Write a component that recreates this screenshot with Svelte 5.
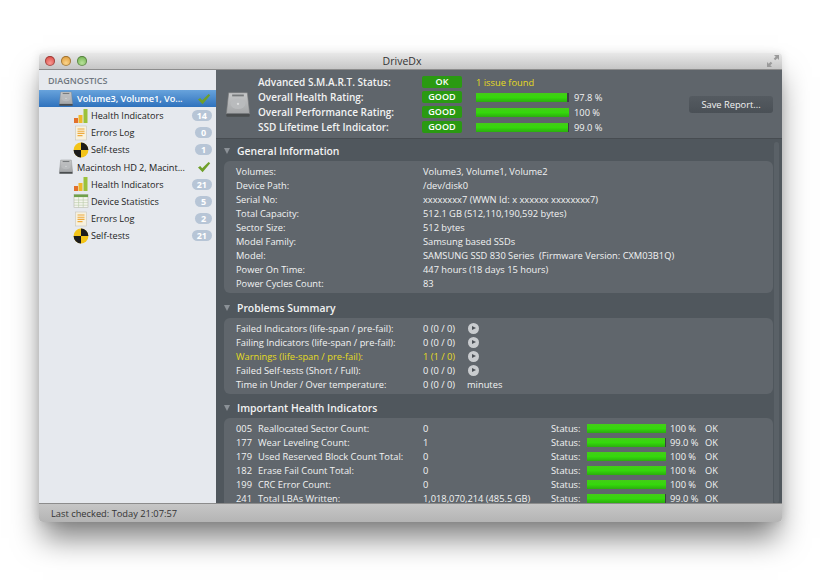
<script>
	const tree = [
		{
			name: 'Volume3, Volume1, Vo...',
			selected: true,
			items: [
				{ icon: 'bars', label: 'Health Indicators', count: 14 },
				{ icon: 'log', label: 'Errors Log', count: 0 },
				{ icon: 'test', label: 'Self-tests', count: 1 }
			]
		},
		{
			name: 'Macintosh HD 2, Macint...',
			items: [
				{ icon: 'bars', label: 'Health Indicators', count: 21 },
				{ icon: 'table', label: 'Device Statistics', count: 5 },
				{ icon: 'log', label: 'Errors Log', count: 2 },
				{ icon: 'test', label: 'Self-tests', count: 21 }
			]
		}
	];

	const ratings = [
		{ label: 'Overall Health Rating:', pct: 97.8, text: '97.8 %' },
		{ label: 'Overall Performance Rating:', pct: 100, text: '100 %' },
		{ label: 'SSD Lifetime Left Indicator:', pct: 99, text: '99.0 %' }
	];

	const general = [
		['Volumes:', 'Volume3, Volume1, Volume2'],
		['Device Path:', '/dev/disk0'],
		['Serial No:', 'xxxxxxxx7 (WWN Id: x xxxxxx xxxxxxxx7)'],
		['Total Capacity:', '512.1 GB (512,110,190,592 bytes)'],
		['Sector Size:', '512 bytes'],
		['Model Family:', 'Samsung based SSDs'],
		['Model:', 'SAMSUNG SSD 830 Series  (Firmware Version: CXM03B1Q)'],
		['Power On Time:', '447 hours (18 days 15 hours)'],
		['Power Cycles Count:', '83']
	];

	const problems = [
		{ label: 'Failed Indicators (life-span / pre-fail):', value: '0 (0 / 0)', go: true },
		{ label: 'Failing Indicators (life-span / pre-fail):', value: '0 (0 / 0)', go: true },
		{ label: 'Warnings (life-span / pre-fail):', value: '1 (1 / 0)', go: true, warn: true },
		{ label: 'Failed Self-tests (Short / Full):', value: '0 (0 / 0)', go: true },
		{ label: 'Time in Under / Over temperature:', value: '0 (0 / 0)', unit: 'minutes' }
	];

	const health = [
		['005', 'Reallocated Sector Count:', '0', 100, '100 %'],
		['177', 'Wear Leveling Count:', '1', 99, '99.0 %'],
		['179', 'Used Reserved Block Count Total:', '0', 100, '100 %'],
		['182', 'Erase Fail Count Total:', '0', 100, '100 %'],
		['199', 'CRC Error Count:', '0', 100, '100 %'],
		['241', 'Total LBAs Written:', '1,018,070,214 (485.5 GB)', 99, '99.0 %']
	];
</script>

{#snippet disk(size)}
	<svg class="disk" width={size} height={size} viewBox="0 0 24 24">
		<defs>
			<linearGradient id="metal" x1="0" y1="0" x2="0" y2="1">
				<stop offset="0" stop-color="#c6c7c8" />
				<stop offset="1" stop-color="#a4a6a8" />
			</linearGradient>
		</defs>
		<path d="M4 1.5h16l2 18H2z" fill="url(#metal)" stroke="#77797b" stroke-width=".5" />
		<rect x="7" y="3" width="10" height="1.6" fill="#777a7c" />
		<rect x="2" y="19.5" width="20" height="2.6" rx=".8" fill="#4a4d4f" />
		<ellipse cx="12" cy="11" rx="6.4" ry="4.4" fill="#b9bbbd" />
		<circle cx="12" cy="11" r="1" fill="#dcddde" />
	</svg>
{/snippet}

{#snippet check()}
	<svg class="check" width="14" height="12" viewBox="0 0 14 12">
		<path d="M1 6.5l2.2-1.6 2 2.4L11.6 1l1.6 1.2-7.6 9z" fill="#6f9f2a" />
	</svg>
{/snippet}

{#snippet navIcon(kind)}
	<svg class="nav-icon" width="16" height="16" viewBox="0 0 16 16">
		{#if kind === 'bars'}
			<rect x="1" y="10" width="4" height="5" fill="#e2702a" />
			<rect x="5.5" y="7" width="4" height="8" fill="#f0b82a" />
			<rect x="10.5" y="1" width="4" height="14" fill="#9cc23a" />
		{:else if kind === 'log'}
			<rect x="2.5" y="1" width="11" height="14" fill="#f7f1de" stroke="#c9c6bb" stroke-width=".6" />
			<path d="M4.5 4h7M4.5 6.2h7M4.5 8.4h7M4.5 10.6h5" stroke="#eeaa3c" stroke-width="1.1" />
		{:else if kind === 'table'}
			<rect x="1" y="1.5" width="14" height="13" fill="#f4f5ee" stroke="#b8bab0" stroke-width=".6" />
			<rect x="1" y="1.5" width="14" height="2.6" fill="#6fa04a" />
			<path d="M1 7h14M1 9.6h14M1 12.2h14M5.6 4v10.5M10.2 4v10.5" stroke="#b9cba8" stroke-width=".6" />
		{:else}
			<circle cx="8" cy="8" r="7.4" fill="#f3c418" />
			<path d="M8 8V.6A7.4 7.4 0 0 1 15.4 8zM8 8v7.4A7.4 7.4 0 0 1 .6 8z" fill="#1c1c1c" />
		{/if}
	</svg>
{/snippet}

{#snippet bar(pct)}
	<div class="bar"><div class="fill" style="width: {pct}%"></div></div>
{/snippet}

<div class="page">
	<div class="window">
		<header class="titlebar">
			<div class="lights">
				<span class="light red"></span>
				<span class="light amber"></span>
				<span class="light green"></span>
			</div>
			<div class="title">DriveDx</div>
			<svg class="expand" width="12" height="12" viewBox="0 0 12 12">
				<path d="M7 0h5v5l-1.7-1.7-2 2-1.6-1.6 2-2zM5 12H0V7l1.7 1.7 2-2 1.6 1.6-2 2z" fill="#9a9a9a" />
			</svg>
		</header>

		<div class="body">
			<aside class="sidebar">
				<div class="diag">DIAGNOSTICS</div>
				{#each tree as vol}
					<div class="volume" class:selected={vol.selected}>
						{@render disk(16)}
						<span class="vol-name">{vol.name}</span>
						{@render check()}
					</div>
					{#each vol.items as item}
						<div class="item">
							{@render navIcon(item.icon)}
							<span class="item-label">{item.label}</span>
							<span class="count">{item.count}</span>
						</div>
					{/each}
				{/each}
			</aside>

			<main class="main">
				<section class="summary">
					<div class="big-disk">{@render disk(28)}</div>
					<div class="summary-rows">
						<div class="sum-row">
							<span class="sum-label">Advanced S.M.A.R.T. Status:</span>
							<span class="pill">OK</span>
							<span class="issue">1 issue found</span>
						</div>
						{#each ratings as r}
							<div class="sum-row">
								<span class="sum-label">{r.label}</span>
								<span class="pill">GOOD</span>
								<div class="sum-bar">{@render bar(r.pct)}</div>
								<span class="sum-pct">{r.text}</span>
							</div>
						{/each}
					</div>
					<button class="save">Save Report...</button>
				</section>

				<div class="scroll">
					<div class="track"></div>

					<h2 class="heading first"><span class="tri"></span>General Information</h2>
					<div class="panel general">
						{#each general as [k, v]}
							<div class="row">
								<span class="key">{k}</span>
								<span class="val">{v}</span>
							</div>
						{/each}
					</div>

					<h2 class="heading"><span class="tri"></span>Problems Summary</h2>
					<div class="panel">
						{#each problems as p}
							<div class="row" class:warn={p.warn}>
								<span class="key">{p.label}</span>
								<span class="val short">{p.value}</span>
								{#if p.go}
									<span class="go"></span>
								{/if}
								{#if p.unit}
									<span class="unit">{p.unit}</span>
								{/if}
							</div>
						{/each}
					</div>

					<h2 class="heading"><span class="tri"></span>Important Health Indicators</h2>
					<div class="panel tail">
						{#each health as [id, name, raw, pct, text]}
							<div class="row">
								<span class="id">{id}</span>
								<span class="name">{name}</span>
								<span class="raw">{raw}</span>
								<span class="status">Status:</span>
								<div class="health-bar">{@render bar(pct)}</div>
								<span class="pct">{text}</span>
								<span class="ok">OK</span>
							</div>
						{/each}
					</div>
				</div>
			</main>
		</div>

		<footer class="statusbar">Last checked: Today 21:07:57</footer>
	</div>
</div>

<style>
	:global(body) {
		margin: 0;
		background: #fff;
	}

	.page {
		width: 820px;
		height: 582px;
		box-sizing: border-box;
		padding: 53px 38px 60px 39px;
		font-family: 'Open Sans', sans-serif;
		font-size: 9.3px;
		overflow: hidden;
	}

	.window {
		height: 469px;
		display: flex;
		flex-direction: column;
		border-radius: 4px;
		overflow: hidden;
		box-shadow: 0 20px 28px -4px rgba(0, 0, 0, 0.5), 0 0 10px rgba(0, 0, 0, 0.1);
	}

	.titlebar {
		height: 16px;
		flex: none;
		display: flex;
		align-items: center;
		position: relative;
		background: linear-gradient(#e8e8e8, #c6c6c6);
		border-bottom: 1px solid #8c8c8c;
	}

	.lights {
		display: flex;
		gap: 6px;
		padding-left: 6px;
	}

	.light {
		width: 10px;
		height: 10px;
		border-radius: 50%;
		box-shadow: inset 0 0 0 1px rgba(0, 0, 0, 0.3);
	}

	.red { background: radial-gradient(circle at 50% 70%, #f79a94, #d5362f); }
	.amber { background: radial-gradient(circle at 50% 70%, #fbd58c, #d98d24); }
	.green { background: radial-gradient(circle at 50% 70%, #b8e29a, #62a83f); }

	.title {
		flex: 1;
		text-align: center;
		font-size: 10.5px;
		color: #333;
		margin-right: 50px;
	}

	.expand {
		margin-right: 3px;
	}

	.body {
		flex: 1;
		display: flex;
		min-height: 0;
	}

	.sidebar {
		width: 177px;
		flex: none;
		background: #e6e9ee;
		box-sizing: border-box;
		padding-top: 5px;
	}

	.diag {
		font-size: 9px;
		font-weight: 600;
		color: #6f7780;
		padding-left: 9px;
		height: 15px;
		line-height: 11px;
	}

	.volume {
		height: 17px;
		display: flex;
		align-items: center;
		padding-left: 19px;
		color: #222;
	}

	.volume.selected {
		background: linear-gradient(#68a3dc, #2f72bd);
		color: #fff;
		font-weight: 600;
	}

	.vol-name {
		margin-left: 3px;
		flex: 1;
		white-space: nowrap;
		font-size: 9.2px;
		letter-spacing: -0.05px;
	}

	.check {
		margin-right: 5px;
	}

	.item {
		height: 17.2px;
		display: flex;
		align-items: center;
		padding-left: 34px;
		color: #222;
	}

	.item-label {
		margin-left: 2px;
		flex: 1;
		font-size: 9.1px;
	}

	.count {
		min-width: 7px;
		padding: 0 5px;
		height: 11px;
		line-height: 11px;
		border-radius: 6px;
		background: #b7c5d6;
		color: #fff;
		font-weight: 700;
		font-size: 9px;
		text-align: center;
		margin-right: 4px;
	}

	.main {
		flex: 1;
		min-width: 0;
		display: flex;
		flex-direction: column;
		background: #50575d;
		color: #f2f3f3;
	}

	.summary {
		height: 69px;
		flex: none;
		box-sizing: border-box;
		display: flex;
		align-items: center;
		background: #5f656b;
		border-bottom: 1px solid #474c51;
		padding: 1px 0 0 8px;
	}

	.big-disk {
		width: 34px;
		flex: none;
		display: flex;
	}

	.summary-rows {
		flex: 1;
	}

	.sum-row {
		height: 15px;
		display: flex;
		align-items: center;
	}

	.sum-label {
		width: 164px;
		flex: none;
		font-weight: 600;
		font-size: 10px;
		white-space: nowrap;
	}

	.pill {
		width: 40px;
		height: 12px;
		line-height: 12px;
		flex: none;
		text-align: center;
		border-radius: 2px;
		background: #2a9a12;
		color: #fff;
		font-size: 9px;
		font-weight: 600;
	}

	.issue {
		margin-left: 14px;
		color: #e6dc22;
	}

	.sum-bar {
		width: 93px;
		margin-left: 14px;
		flex: none;
	}

	.sum-pct {
		margin-left: 5px;
	}

	.bar {
		height: 9px;
		background: #3a3f43;
		overflow: hidden;
	}

	.fill {
		height: 100%;
		background: linear-gradient(#44cc18, #35d80c 50%, #2bae0e);
	}

	.save {
		width: 84px;
		height: 17px;
		flex: none;
		margin: 0 9px 0 0;
		padding: 0;
		border: 0;
		border-radius: 3px;
		background: linear-gradient(#555b61, #4a5056);
		color: #f2f3f3;
		font: inherit;
	}

	.scroll {
		flex: 1;
		min-height: 0;
		overflow: hidden;
		position: relative;
		padding: 0 9px 0 8px;
	}

	.track {
		position: absolute;
		right: 3px;
		top: 3px;
		bottom: 0;
		width: 5px;
		border-radius: 3px;
		background: #5a6167;
	}

	.heading {
		margin: 0;
		height: 24px;
		display: flex;
		align-items: center;
		font-size: 10.4px;
		font-weight: 600;
		color: #f2f3f3;
		padding-top: 3px;
		box-sizing: border-box;
	}

	.heading.first {
		height: 22px;
		padding-top: 1px;
	}

	.tri {
		width: 0;
		height: 0;
		border-left: 3.5px solid transparent;
		border-right: 3.5px solid transparent;
		border-top: 6px solid #8b9197;
		margin-right: 7px;
	}

	.panel {
		background: #60666c;
		border-radius: 6px;
		padding: 3px 0 3px 12px;
	}

	.panel.general {
		margin-bottom: 1px;
	}

	.panel.tail {
		padding-bottom: 20px;
	}

	.row {
		height: 14px;
		display: flex;
		align-items: center;
		white-space: pre;
	}

	.key {
		width: 187px;
		flex: none;
	}

	.warn {
		color: #e6dc22;
	}

	.val.short {
		width: 44px;
		flex: none;
	}

	.go {
		width: 11px;
		height: 11px;
		border-radius: 50%;
		background: #c9cccf;
		margin-left: 1px;
		position: relative;
	}

	.go::after {
		content: '';
		position: absolute;
		left: 4px;
		top: 3px;
		border-left: 4px solid #4b5056;
		border-top: 2.5px solid transparent;
		border-bottom: 2.5px solid transparent;
	}

	.id {
		width: 22px;
		flex: none;
	}

	.name {
		width: 165px;
		flex: none;
	}

	.raw {
		width: 128px;
		flex: none;
	}

	.status {
		width: 36px;
		flex: none;
	}

	.health-bar {
		width: 79px;
		flex: none;
	}

	.pct {
		width: 35px;
		flex: none;
		margin-left: 4px;
	}

	.statusbar {
		height: 19px;
		flex: none;
		box-sizing: border-box;
		display: flex;
		align-items: center;
		padding-left: 12px;
		background: linear-gradient(#c6c6c6, #b4b4b4);
		border-top: 1px solid #8c8c8c;
		color: #333;
	}
</style>
